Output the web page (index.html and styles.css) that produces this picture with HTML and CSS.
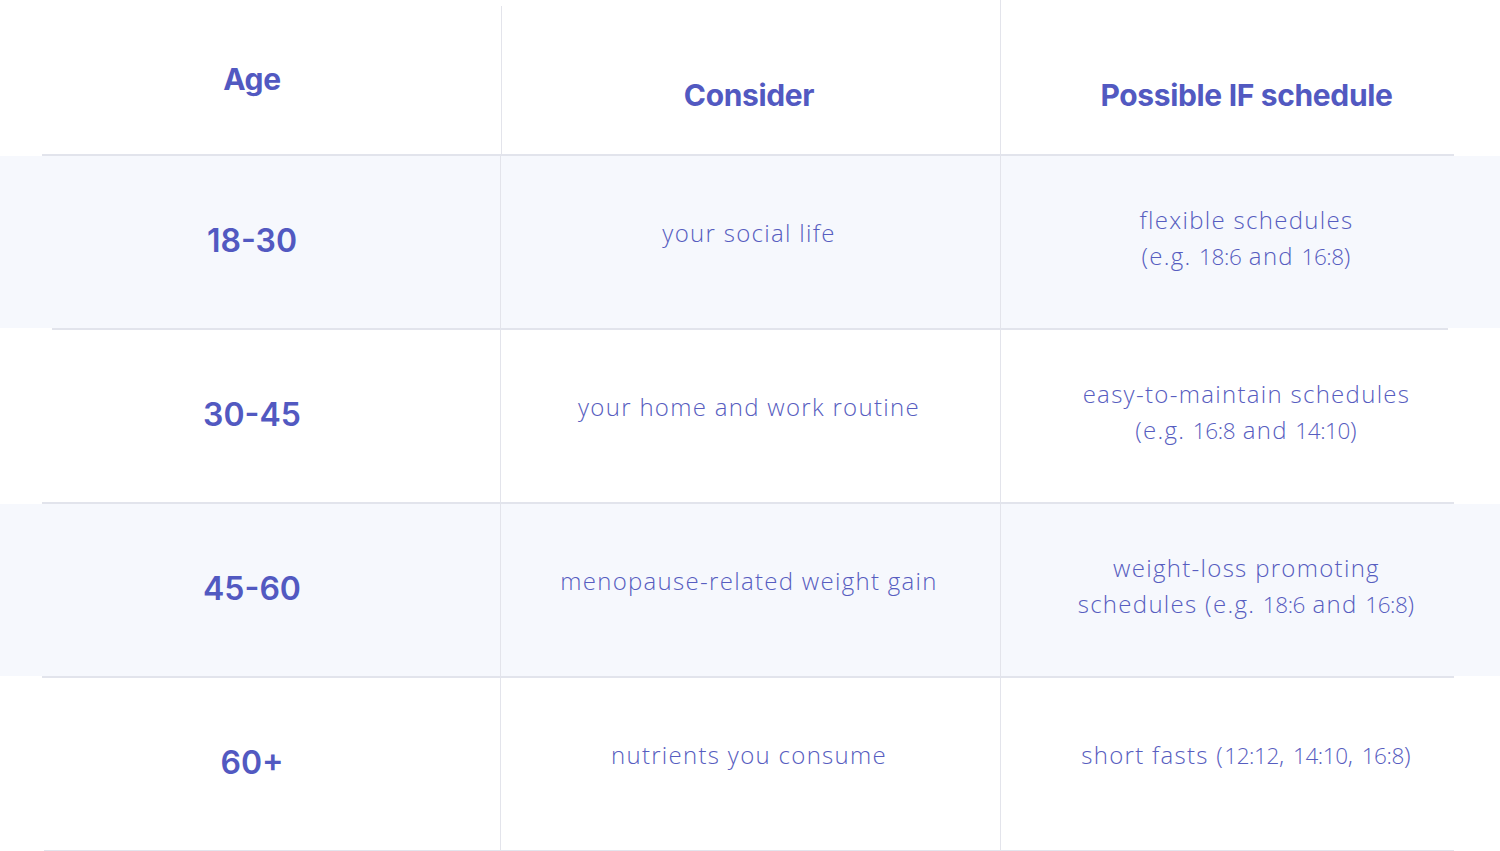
FILE: index.html
```html
<!DOCTYPE html>
<html lang="en">
<head>
<meta charset="utf-8">
<title>IF schedule by age</title>
<link rel="stylesheet" href="styles.css">
</head>
<body>
<div class="table">
  <div class="row head">
    <div class="cell col-age age-head"><span class="th">Age</span></div>
    <div class="cell col-mid"><span class="th">Consider</span></div>
    <div class="cell col-last"><span class="th">Possible IF schedule</span></div>
  </div>
  <div class="sep"></div>
  <div class="row shaded">
    <div class="cell col-age"><span class="age">18-30</span></div>
    <div class="cell col-mid"><span class="txt one">your social life</span></div>
    <div class="cell col-last"><span class="txt">flexible schedules<br>(e.g. <span class="num">18:6</span> and <span class="num">16:8</span>)</span></div>
  </div>
  <div class="sep sep-b"></div>
  <div class="row">
    <div class="cell col-age"><span class="age">30-45</span></div>
    <div class="cell col-mid"><span class="txt one">your home and work routine</span></div>
    <div class="cell col-last"><span class="txt">easy-to-maintain schedules<br>(e.g. <span class="num">16:8</span> and <span class="num">14:10</span>)</span></div>
  </div>
  <div class="sep"></div>
  <div class="row shaded">
    <div class="cell col-age"><span class="age">45-60</span></div>
    <div class="cell col-mid"><span class="txt one">menopause-related weight gain</span></div>
    <div class="cell col-last"><span class="txt">weight-loss promoting<br>schedules (e.g. <span class="num">18:6</span> and <span class="num">16:8</span>)</span></div>
  </div>
  <div class="sep"></div>
  <div class="row">
    <div class="cell col-age"><span class="age">60+</span></div>
    <div class="cell col-mid"><span class="txt one">nutrients you consume</span></div>
    <div class="cell col-last"><span class="txt one">short fasts (<span class="num">12:12</span>, <span class="num">14:10</span>, <span class="num">16:8</span>)</span></div>
  </div>
  <div class="sep sep-end"></div>
</div>
</body>
</html>
```

FILE: styles.css
```css
html, body {
  margin: 0;
  padding: 0;
  background: #ffffff;
}

body {
  width: 1500px;
  height: 851px;
  overflow: hidden;
  color: #5259c1;
}

.table {
  display: flex;
  flex-direction: column;
}

.row {
  display: grid;
  grid-template-columns: 500px 500px 500px;
  height: 172px;
}

.row.head {
  height: 154px;
}

.row.shaded {
  background: #f6f8fd;
}

.cell {
  display: flex;
  align-items: center;
  justify-content: center;
  text-align: center;
  box-sizing: border-box;
}

.cell + .cell {
  border-left: 1px solid #e3e4eb;
}

.col-age {
  padding-left: 4px;
}

.col-mid {
  padding-right: 3px;
}

.col-last {
  padding-right: 8px;
}

.head .col-mid {
  border-left-color: transparent;
  background: linear-gradient(#fff 0 6px, #e3e4eb 6px) left / 1px 100% no-repeat;
}

.head .cell {
  padding-top: 36px;
}

.head .cell.age-head {
  padding-top: 4px;
}

.th {
  font-family: "Inter", "Liberation Sans", sans-serif;
  font-weight: 700;
  font-size: 30px;
  letter-spacing: -0.35px;
}

.age {
  font-family: "Inter", "Liberation Sans", sans-serif;
  font-weight: 600;
  font-size: 32px;
  letter-spacing: 0px;
  margin-top: -4px;
}

.txt {
  font-family: "Open Sans", "Liberation Sans", sans-serif;
  font-weight: 300;
  font-size: 24px;
  line-height: 36px;
  letter-spacing: 1.3px;
  color: #575dc0;
  margin-top: -8px;
}

.txt.one {
  margin-top: -18px;
}

.num {
  font-size: 22.5px;
  letter-spacing: -0.4px;
}

.sep {
  height: 2px;
  margin: 0 46px 0 42px;
  background: #e2e4ec;
}

.sep-b {
  margin: 0 52px 0 52px;
}

.sep-end {
  margin: 0 46px 0 44px;
}
```
